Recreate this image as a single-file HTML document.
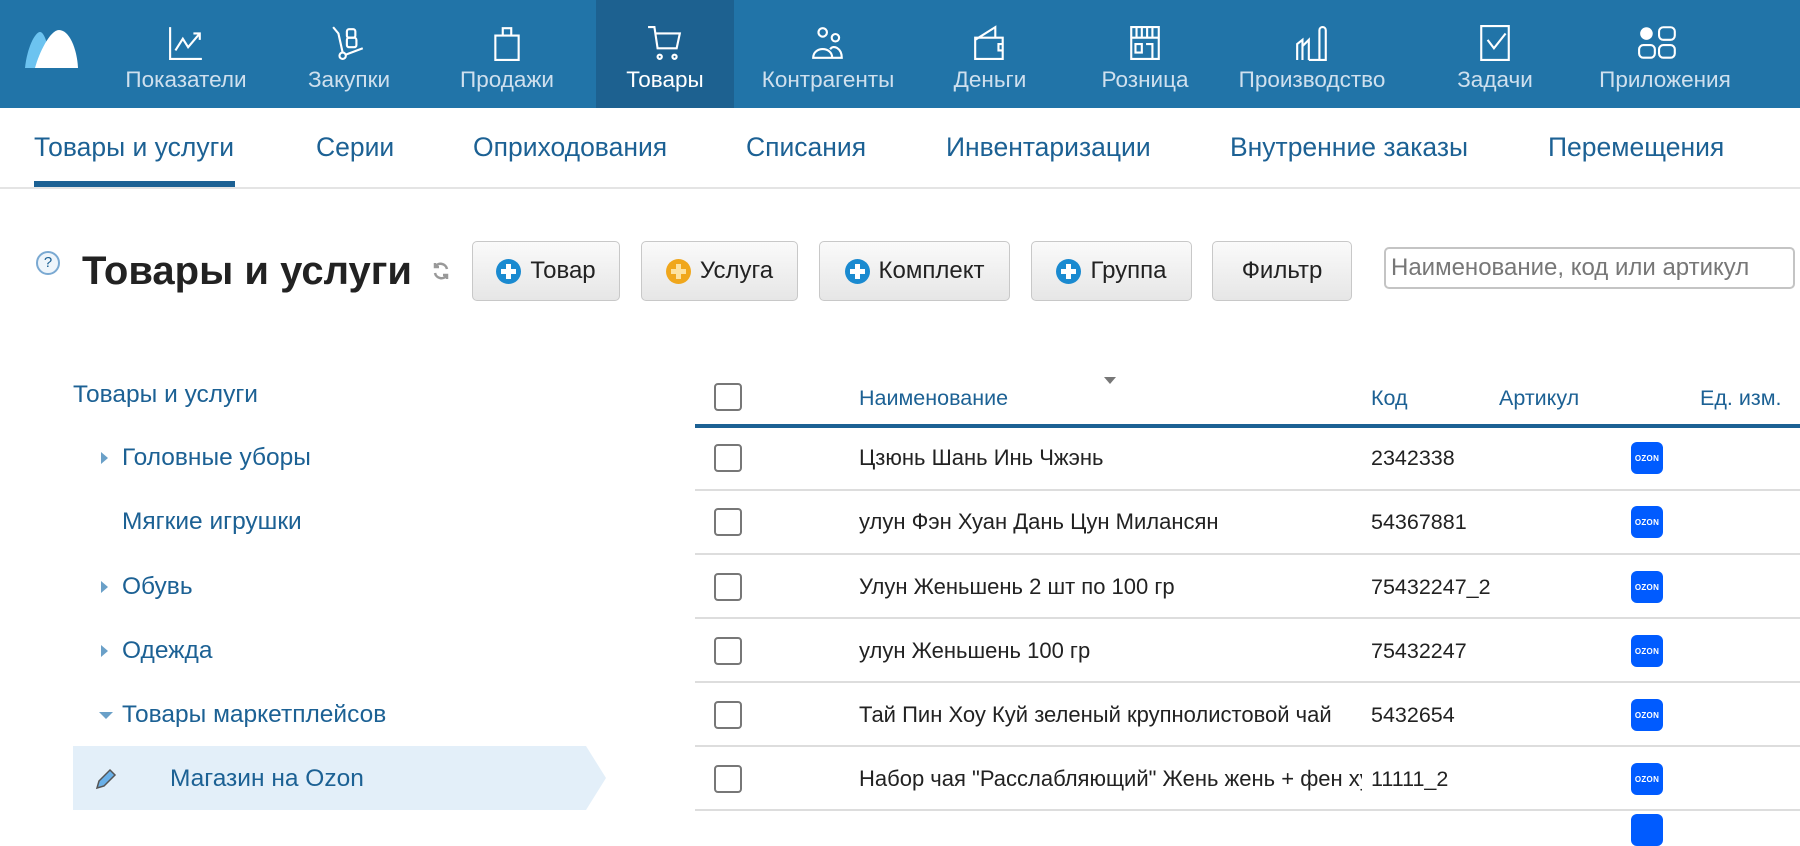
<!DOCTYPE html>
<html><head><meta charset="utf-8"><style>
*{box-sizing:border-box;margin:0;padding:0}
body{width:1800px;height:816px;overflow:hidden;background:#fff;font-family:"Liberation Sans",sans-serif;position:relative}
.a{position:absolute}
.t{height:30px;line-height:30px;white-space:nowrap}
.top{left:0;top:0;width:1800px;height:108px;background:#2174a8}
.nav{top:0;height:108px;width:150px;margin-left:-75px;text-align:center;color:#cfe0ee;font-size:22.5px}
.nav svg{position:absolute;left:57px;top:25px}
.nav span{position:absolute;left:-30px;right:-30px;top:65px;height:30px;line-height:30px;white-space:nowrap}
.sub{top:132px;font-size:26.5px;color:#1c6194}
.btn{top:241px;height:60px;border:1px solid #c8c8c8;border-radius:5px;background:linear-gradient(#fafafa,#e6e6e6);font-size:24px;color:#222;display:flex;align-items:center;justify-content:center;gap:9px}
.pl{width:25px;height:25px;border-radius:50%;background:#1a8ad0;position:relative}
.pl:before{content:"";position:absolute;left:5px;top:10px;width:15px;height:5px;background:#fff}
.pl:after{content:"";position:absolute;left:10px;top:5px;width:5px;height:15px;background:#fff}
.or{background:#f0a71c}.or:before,.or:after{background:#fde2a0}
.side{font-size:24.5px;color:#1c6194}
.tri{width:0;height:0;border-top:6px solid transparent;border-bottom:6px solid transparent;border-left:7px solid #6aa0c8}
.cb{left:714px;width:28px;height:28px;border:2px solid #777;border-radius:4px;background:#fff}
.row{left:695px;width:1105px;height:2px;background:#ddd}
.cell{font-size:22px;color:#222}
.code{font-size:21.5px;color:#222}
.oz{left:1631px;width:32px;height:32px;border-radius:6px;background:#005bff;color:#fff;font-size:8px;font-weight:bold;display:flex;align-items:center;justify-content:center;letter-spacing:.3px}
</style></head><body>
<div class="a top"></div>
<div class="a" style="left:596px;top:0;width:138px;height:108px;background:#1d6190"></div>
<svg class="a" style="left:25px;top:28px" width="55" height="42" viewBox="0 0 55 42"><path d="M0 40 C2 20 10 4 15 4 C20 4 24 20 26 40Z" fill="#6cc3f0"/><path d="M10 40 C14 25 25 2 34 2 C44 2 52 20 53 40Z" fill="#fff"/></svg>

<div class="a nav" style="left:186px"><svg width="36" height="36" viewBox="0 0 34 34" fill="none" stroke="#fff" stroke-width="2"><path d="M2 2V32H32M7 24L14 13L19 21L30 8M24 8H30V14"/></svg><span>Показатели</span></div>
<div class="a nav" style="left:349px"><svg width="36" height="36" viewBox="0 0 34 34" fill="none" stroke="#fff" stroke-width="2"><path d="M2 2L7 8L11 26M14 28L30 22"/><circle cx="11" cy="29" r="3"/><rect x="15" y="4" width="8" height="8" rx="2"/><rect x="15" y="12" width="9" height="9" rx="2"/></svg><span>Закупки</span></div>
<div class="a nav" style="left:507px"><svg width="36" height="36" viewBox="0 0 34 34" fill="none" stroke="#fff" stroke-width="2"><path d="M6 10H28V33H6ZM13 10V3H21V10"/></svg><span>Продажи</span></div>
<div class="a nav" style="left:665px;color:#fff"><svg width="36" height="36" viewBox="0 0 34 34" fill="none" stroke="#fff" stroke-width="2"><path d="M1 2H7L10 22H28L31 8H8"/><circle cx="12" cy="30" r="2"/><circle cx="26" cy="30" r="2"/></svg><span>Товары</span></div>
<div class="a nav" style="left:828px"><svg width="36" height="36" viewBox="0 0 34 34" fill="none" stroke="#fff" stroke-width="2"><circle cx="12" cy="7" r="4"/><circle cx="24" cy="12" r="3.5"/><path d="M3 31C3 20 21 20 21 31ZM21 31H30C30 22 22 18 19 23"/></svg><span>Контрагенты</span></div>
<div class="a nav" style="left:990px"><svg width="36" height="36" viewBox="0 0 34 34" fill="none" stroke="#fff" stroke-width="2"><path d="M3 14L22 2V12M3 14V32H29V12H3ZM29 18H25V24H29"/></svg><span>Деньги</span></div>
<div class="a nav" style="left:1145px"><svg width="36" height="36" viewBox="0 0 34 34" fill="none" stroke="#fff" stroke-width="2"><path d="M4 2H30V12H4ZM4 12V32H30V12M9 2V12M14 2V12M19 2V12M24 2V12M8 18H14V26H8ZM18 18H24V32"/></svg><span>Розница</span></div>
<div class="a nav" style="left:1312px"><svg width="36" height="36" viewBox="0 0 34 34" fill="none" stroke="#fff" stroke-width="2"><path d="M3 33V18L8 14V33M8 20L14 14V33M14 33H30V5C30 1 24 1 24 5V33"/></svg><span>Производство</span></div>
<div class="a nav" style="left:1495px"><svg width="36" height="36" viewBox="0 0 34 34" fill="none" stroke="#fff" stroke-width="2"><path d="M4 1H30V33H4ZM10 14L16 22L27 8"/></svg><span>Задачи</span></div>
<div class="a nav" style="left:1655px"><svg width="42" height="36" viewBox="0 0 40 34" fill="none" stroke="#fff" stroke-width="2"><circle cx="9" cy="8" r="5" fill="#fff"/><rect x="21" y="2" width="15" height="12" rx="4"/><rect x="2" y="19" width="15" height="12" rx="4"/><rect x="21" y="19" width="15" height="12" rx="4"/></svg><span style="left:-20px;right:-40px">Приложения</span></div>

<div class="a" style="left:0;top:187px;width:1800px;height:2px;background:#e4e4e4"></div>
<div class="a t sub" style="left:34px">Товары и услуги</div>
<div class="a" style="left:34px;top:181px;width:201px;height:6px;background:#1c6194"></div>
<div class="a t sub" style="left:316px">Серии</div>
<div class="a t sub" style="left:473px">Оприходования</div>
<div class="a t sub" style="left:746px">Списания</div>
<div class="a t sub" style="left:946px">Инвентаризации</div>
<div class="a t sub" style="left:1230px">Внутренние заказы</div>
<div class="a t sub" style="left:1548px">Перемещения</div>

<div class="a" style="left:36px;top:251px;width:24px;height:24px;border:2px solid #7aa9d2;border-radius:50%;color:#1c6194;font-size:15px;text-align:center;line-height:20px;background:#eef5fb">?</div>
<div class="a" style="left:82px;top:248px;height:46px;line-height:46px;font-size:40px;font-weight:bold;color:#222;white-space:nowrap">Товары и услуги</div>
<svg class="a" style="left:431px;top:261px" width="20" height="20" viewBox="0 0 20 20" fill="none" stroke="#999" stroke-width="2.5"><path d="M16 8A6.5 6.5 0 0 0 4 6M4 12A6.5 6.5 0 0 0 16 14M4 2V6H8M16 18V14H12"/></svg>
<div class="a btn" style="left:472px;width:148px"><div class="pl"></div>Товар</div>
<div class="a btn" style="left:641px;width:157px"><div class="pl or"></div>Услуга</div>
<div class="a btn" style="left:819px;width:191px"><div class="pl"></div>Комплект</div>
<div class="a btn" style="left:1031px;width:161px"><div class="pl"></div>Группа</div>
<div class="a btn" style="left:1212px;width:140px">Фильтр</div>
<div class="a" style="left:1384px;top:247px;width:411px;height:42px;border:2px solid #c4c4c4;border-radius:5px;font-size:24px;color:#777;padding:0 0 0 5px;line-height:38px;white-space:nowrap;overflow:hidden">Наименование, код или артикул</div>

<div class="a t side" style="left:73px;top:380px">Товары и услуги</div>
<div class="a tri" style="left:101px;top:452px"></div><div class="a t side" style="left:122px;top:443px">Головные уборы</div>
<div class="a t side" style="left:122px;top:507px">Мягкие игрушки</div>
<div class="a tri" style="left:101px;top:581px"></div><div class="a t side" style="left:122px;top:572px">Обувь</div>
<div class="a tri" style="left:101px;top:645px"></div><div class="a t side" style="left:122px;top:636px">Одежда</div>
<div class="a" style="left:99px;top:712px;border-left:7px solid transparent;border-right:7px solid transparent;border-top:7px solid #6aa0c8"></div><div class="a t side" style="left:122px;top:700px">Товары маркетплейсов</div>
<svg class="a" style="left:73px;top:746px" width="533" height="64"><path d="M0 0H513L533 32L513 64H0Z" fill="#e3eff9"/></svg>
<svg class="a" style="left:94px;top:767px" width="24" height="24" viewBox="0 0 24 24"><path d="M3 21L5 14L16 3L21 8L10 19Z" fill="#6ab0e8" stroke="#555" stroke-width="1.5"/></svg>
<div class="a t side" style="left:170px;top:764px">Магазин на Ozon</div>

<div class="a cb" style="top:383px"></div>
<div class="a" style="left:1104px;top:377px;border-left:6px solid transparent;border-right:6px solid transparent;border-top:7px solid #777"></div>
<div class="a t cell" style="left:859px;top:383px;color:#1c6194;font-size:21.5px">Наименование</div>
<div class="a t cell" style="left:1371px;top:383px;color:#1c6194;font-size:21.5px">Код</div>
<div class="a t cell" style="left:1499px;top:383px;color:#1c6194;font-size:21.5px">Артикул</div>
<div class="a t cell" style="left:1700px;top:383px;color:#1c6194;font-size:21.5px">Ед. изм.</div>
<div class="a" style="left:695px;top:424px;width:1105px;height:4px;background:#1c6194"></div>

<div class="a cb" style="top:444px"></div><div class="a t cell" style="left:859px;top:443px">Цзюнь Шань Инь Чжэнь</div><div class="a t code" style="left:1371px;top:443px">2342338</div><div class="a oz" style="top:442px">OZON</div><div class="a row" style="top:489px"></div>
<div class="a cb" style="top:508px"></div><div class="a t cell" style="left:859px;top:507px">улун Фэн Хуан Дань Цун Милансян</div><div class="a t code" style="left:1371px;top:507px">54367881</div><div class="a oz" style="top:506px">OZON</div><div class="a row" style="top:553px"></div>
<div class="a cb" style="top:573px"></div><div class="a t cell" style="left:859px;top:572px">Улун Женьшень 2 шт по 100 гр</div><div class="a t code" style="left:1371px;top:572px">75432247_2</div><div class="a oz" style="top:571px">OZON</div><div class="a row" style="top:617px"></div>
<div class="a cb" style="top:637px"></div><div class="a t cell" style="left:859px;top:636px">улун Женьшень 100 гр</div><div class="a t code" style="left:1371px;top:636px">75432247</div><div class="a oz" style="top:635px">OZON</div><div class="a row" style="top:681px"></div>
<div class="a cb" style="top:701px"></div><div class="a t cell" style="left:859px;top:700px">Тай Пин Хоу Куй зеленый крупнолистовой чай</div><div class="a t code" style="left:1371px;top:700px">5432654</div><div class="a oz" style="top:699px">OZON</div><div class="a row" style="top:745px"></div>
<div class="a cb" style="top:765px"></div><div class="a t cell" style="left:859px;top:764px;width:503px;overflow:hidden">Набор чая "Расслабляющий" Жень жень + фен хуан</div><div class="a t code" style="left:1371px;top:764px">11111_2</div><div class="a oz" style="top:763px">OZON</div><div class="a row" style="top:809px"></div>
<div class="a oz" style="top:814px"></div>
</body></html>
